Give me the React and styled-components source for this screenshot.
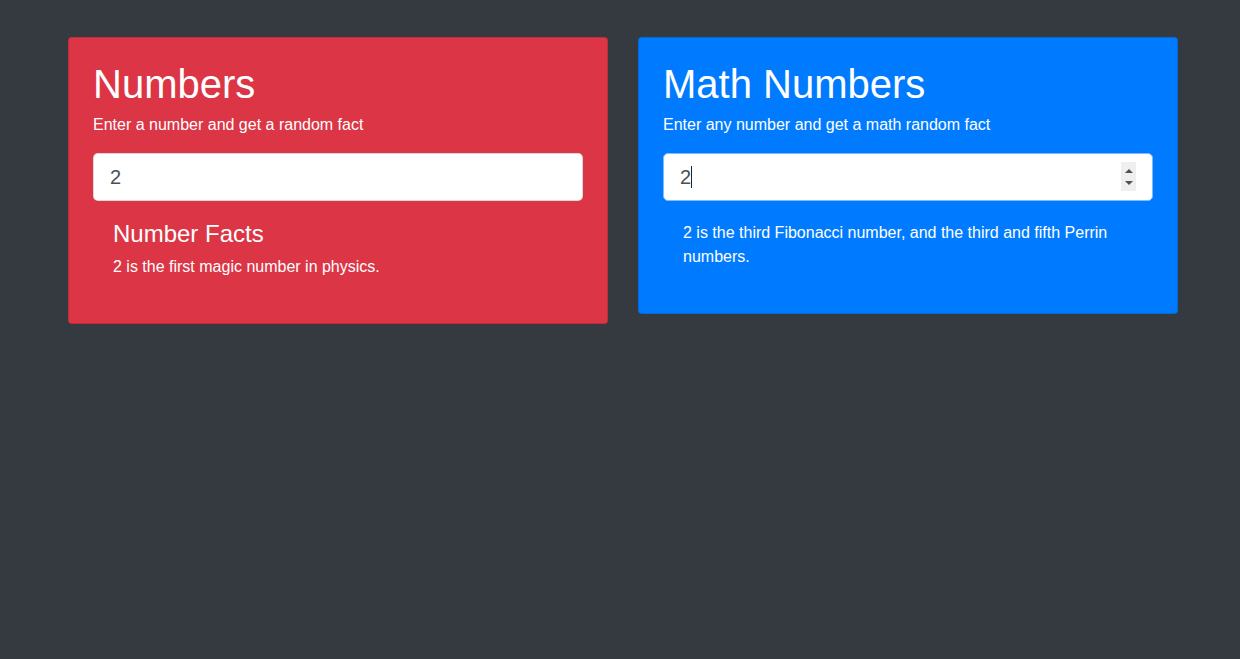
import React from "react";
import styled, { createGlobalStyle } from "styled-components";

const Global = createGlobalStyle`
  html, body { margin: 0; padding: 0; background: #343a40; }
  body {
    font-family: "Liberation Sans", Arial, sans-serif;
    font-size: 16px;
    line-height: 1.5;
    color: #212529;
    min-height: 659px;
  }
  * { box-sizing: border-box; }
`;

const Page = styled.div`
  min-height: 659px;
  background: #343a40;
  padding-top: 37px;
`;

const Grid = styled.div`
  width: 1110px;
  margin-left: 68px;
  display: grid;
  grid-template-columns: 1fr 1fr;
  column-gap: 30px;
  align-items: start;
`;

const Card = styled.section`
  background: ${(p) => p.$bg};
  border: 1px solid rgba(0, 0, 0, 0.125);
  border-radius: 4px;
  padding: 24px;
  color: #fff;
`;

const Title = styled.h1`
  margin: 0 0 7px;
  font-size: 40px;
  font-weight: 400;
  line-height: 1.1;
`;

const Lead = styled.p`
  margin: 0 0 16px;
  font-size: 16px;
  line-height: 24px;
`;

const InputWrap = styled.div`
  position: relative;
`;

const NumberInput = styled.input`
  display: block;
  width: 100%;
  height: 48px;
  padding: 8px 16px;
  font-family: "Liberation Sans", Arial, sans-serif;
  font-size: 20px;
  line-height: 1.5;
  color: #495057;
  background: #fff;
  border: 1px solid ${(p) => (p.$focused ? "#80bdff" : "rgba(0,0,0,0.15)")};
  border-radius: 5px;
  outline: none;
  caret-color: #212529;
`;

const Spinner = styled.div`
  position: absolute;
  right: 17px;
  top: 9px;
  width: 15px;
  height: 29px;
  background: #efefef;
  display: flex;
  flex-direction: column;
  align-items: center;
  justify-content: center;
  gap: 8px;
`;

const Arrow = styled.span`
  width: 0;
  height: 0;
  border-left: 4px solid transparent;
  border-right: 4px solid transparent;
  ${(p) =>
    p.$up
      ? "border-bottom: 4px solid #505050;"
      : "border-top: 4px solid #505050;"}
`;

const Caret = styled.span`
  position: absolute;
  left: 28px;
  top: 13px;
  width: 1px;
  height: 22px;
  background: #212529;
`;

const Facts = styled.div`
  padding: ${(p) => p.$pad};
`;

const FactsTitle = styled.h4`
  margin: 0 0 6px;
  font-size: 24px;
  font-weight: 400;
  line-height: 1.2;
`;

const FactText = styled.p`
  margin: 0;
  font-size: 16px;
  line-height: 24px;
`;

export default function App() {
  return (
    <Page>
      <Global />
      <Grid>
        <Card $bg="#dc3545">
          <Title>Numbers</Title>
          <Lead>Enter a number and get a random fact</Lead>
          <InputWrap>
            <NumberInput type="text" defaultValue="2" readOnly />
          </InputWrap>
          <Facts $pad="19px 20px 20px">
            <FactsTitle>Number Facts</FactsTitle>
            <FactText>2 is the first magic number in physics.</FactText>
          </Facts>
        </Card>
        <Card $bg="#007bff">
          <Title>Math Numbers</Title>
          <Lead>Enter any number and get a math random fact</Lead>
          <InputWrap>
            <NumberInput type="text" defaultValue="2" readOnly $focused />
            <Caret />
            <Spinner>
              <Arrow $up />
              <Arrow />
            </Spinner>
          </InputWrap>
          <Facts $pad="20px 20px 20px">
            <FactText>
              2 is the third Fibonacci number, and the third and fifth Perrin
              numbers.
            </FactText>
          </Facts>
        </Card>
      </Grid>
    </Page>
  );
}
